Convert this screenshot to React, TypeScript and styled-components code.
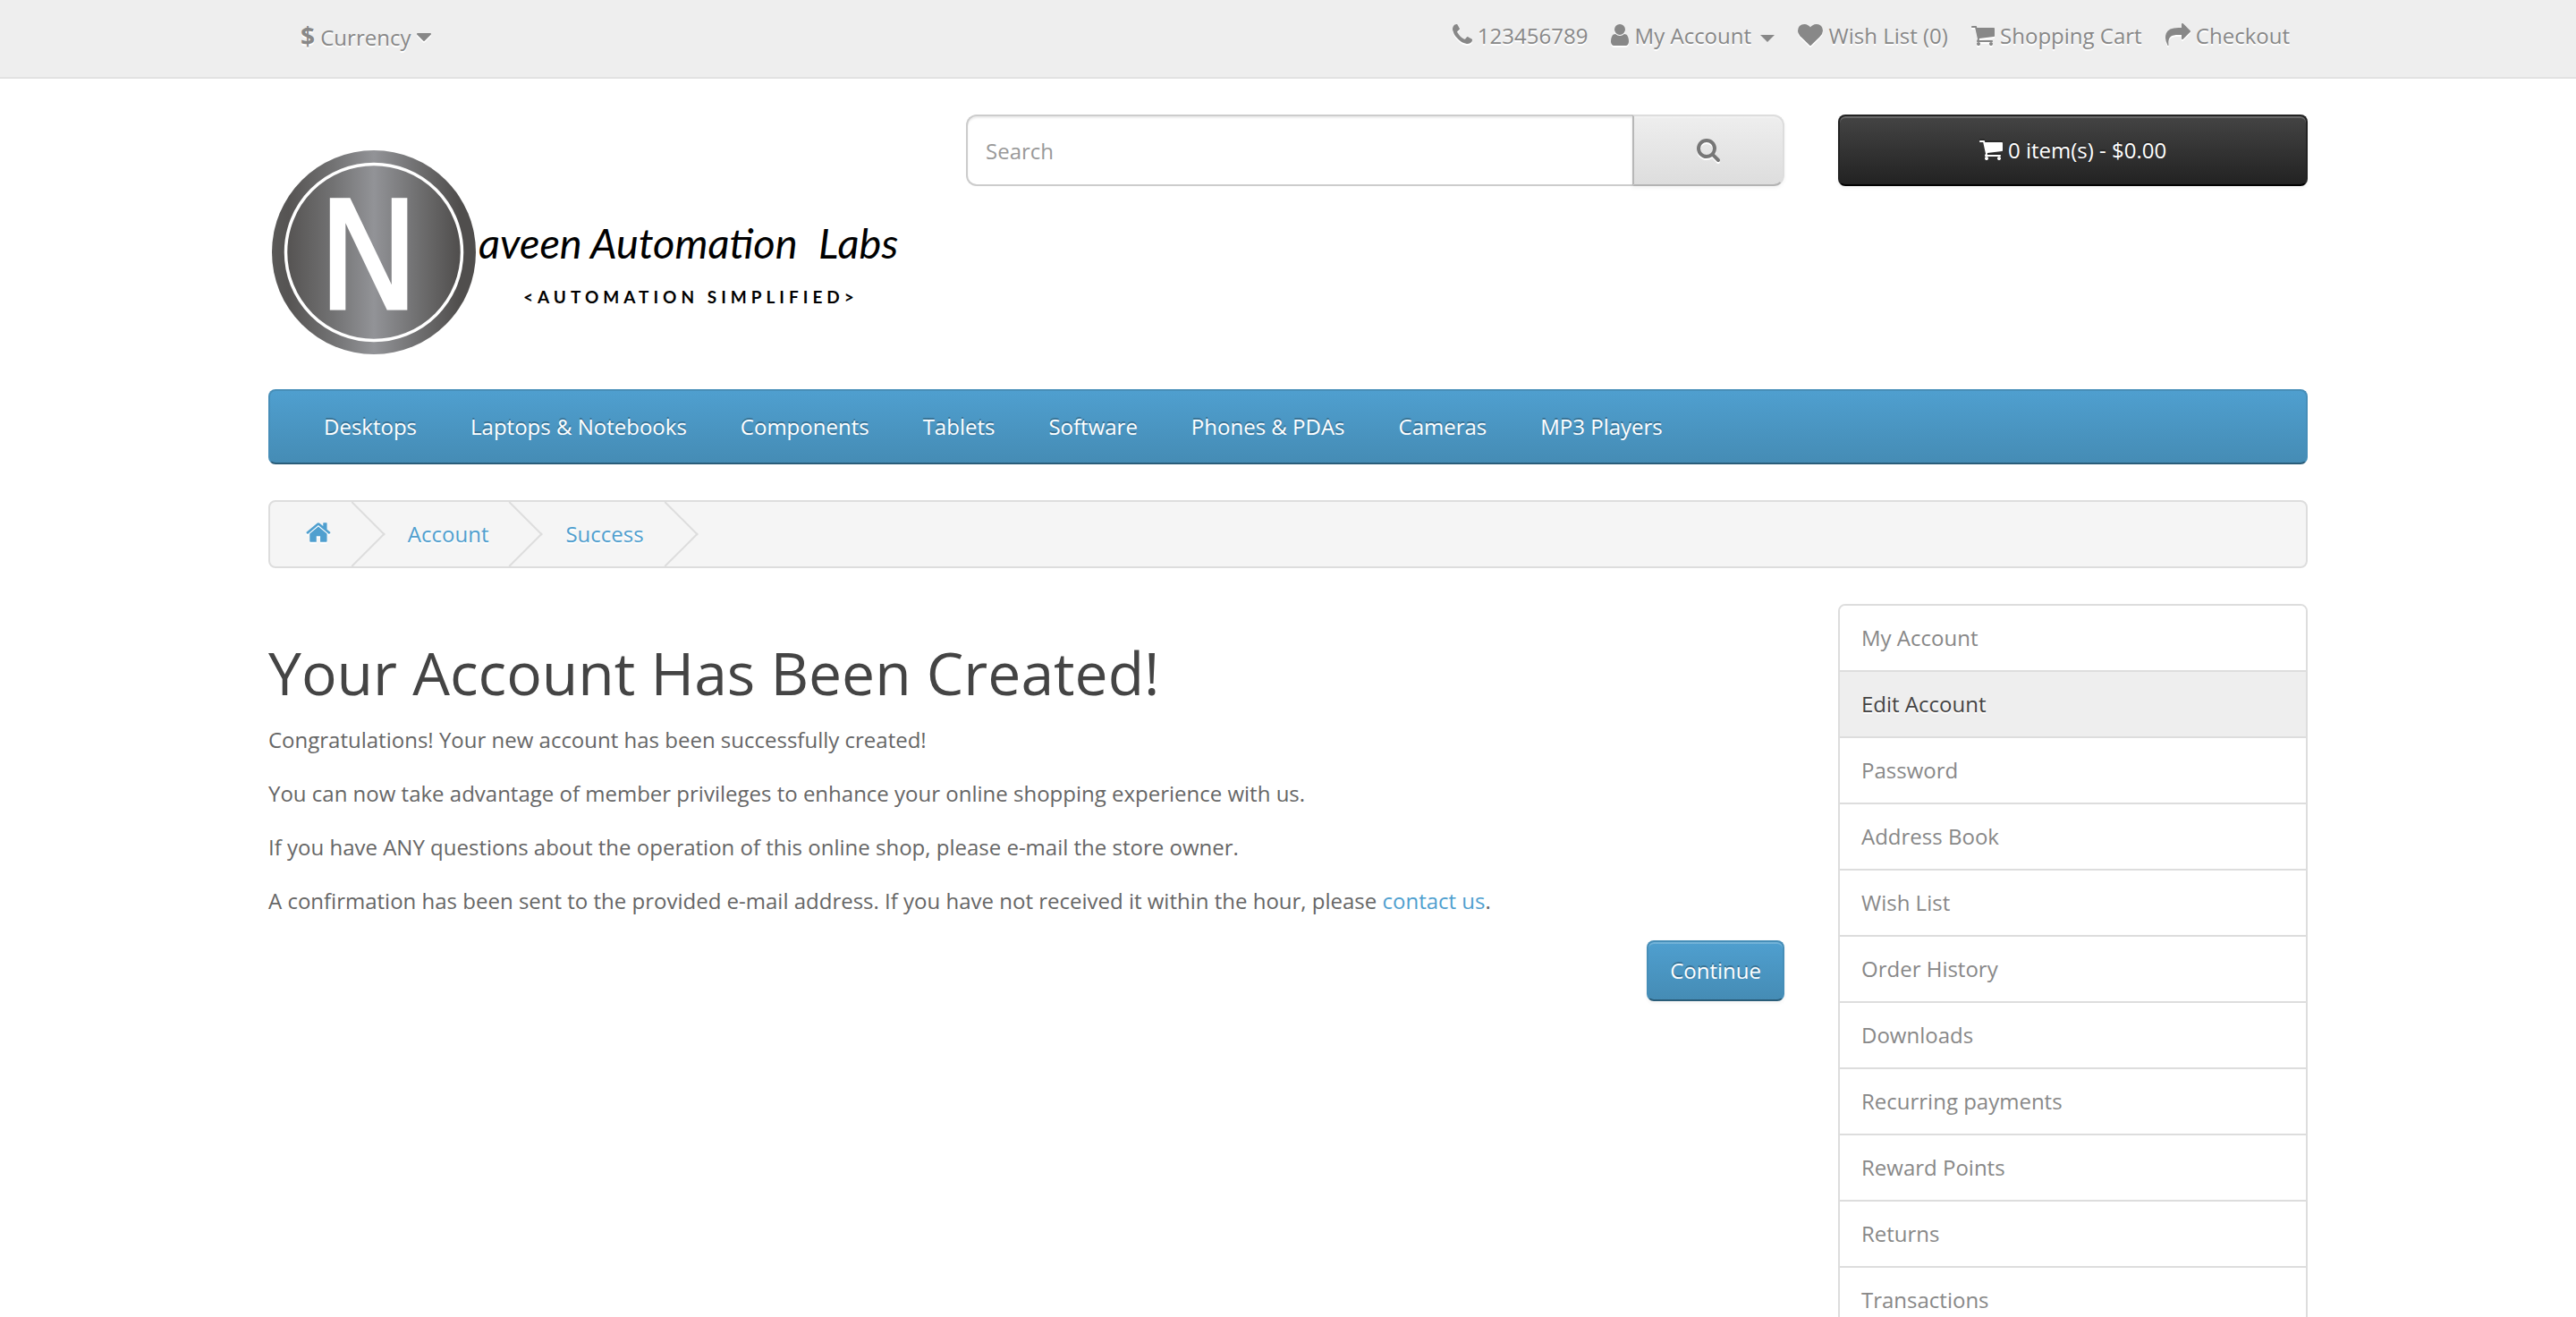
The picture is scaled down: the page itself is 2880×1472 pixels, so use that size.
import React from "react";
import styled, { createGlobalStyle, css } from "styled-components";

const GlobalStyle = createGlobalStyle`
  *, *::before, *::after { box-sizing: border-box; }
  html { scrollbar-width: none; }
  body {
    margin: 0;
    background: #fff;
    color: #666;
    font: 400 24px/40px "Open Sans", "Noto Sans", sans-serif;
  }
  a { color: #4f9fcf; text-decoration: none; }
  button, input { font: inherit; margin: 0; }
  ul, ol { list-style: none; margin: 0; padding: 0; }
`;

const glyphs = {
  phone: [192, 1408, "M1600 1240q0 27-10 70.500t-21 68.500q-21 50-122 106-94 51-186 51-27 0-53-3.500t-57.500-12.500-47-14.500-55.500-20.500-49-18q-98-35-175-83-127-79-264-216t-216-264q-48-77-83-175-3-9-18-49t-20.500-55.500-14.500-47-12.500-57.500-3.500-53q0-92 51-186 56-101 106-122 25-11 68.500-21t70.500-10q14 0 21 3 18 6 53 76 11 19 30 54t35 63.500 31 53.500q3 4 17.500 25t21.500 35.500 7 28.500q0 20-28.500 50t-62 55-62 53-28.500 46q0 9 5 22.500t8.500 20.500 14 24 11.500 19q76 137 174 235t235 174q2 1 19 11.500t24 14 20.500 8.500 22.500 5q18 0 46-28.500t53-62 55-62 50-28.500q14 0 28.500 7t35.500 21.500 25 17.500q25 15 53.500 31t63.500 35 54 30q70 35 76 53 3 7 3 21z"],
  user: [256, 1280, "M1536 1399q0 109-62.5 187t-150.5 78h-854q-88 0-150.5-78t-62.5-187q0-85 8.5-160.5t31.5-152 58.5-131 94-89 134.5-34.5q131 128 313 128t313-128q76 0 134.5 34.5t94 89 58.5 131 31.5 152 8.5 160.5zm-256-887q0 159-112.5 271.5t-271.5 112.5-271.5-112.5-112.5-271.5 112.5-271.5 271.5-112.5 271.5 112.5 112.5 271.5z"],
  heart: [0, 1792, "M896 1664q-26 0-44-18l-624-602q-10-8-27.5-26t-55.5-65.5-68-97.5-53.5-121-23.5-138q0-220 127-344t351-124q62 0 126.5 21.5t120 58 95.5 68.5 76 68q36-36 76-68t95.5-68.5 120-58 126.5-21.5q224 0 351 124t127 344q0 221-229 450l-623 600q-18 18-44 18z"],
  cart: [64, 1664, "M704 1536q0 52-38 90t-90 38-90-38-38-90 38-90 90-38 90 38 38 90zm896 0q0 52-38 90t-90 38-90-38-38-90 38-90 90-38 90 38 38 90zm128-1088v512q0 24-16.5 42.5t-40.5 21.5l-1044 122q13 60 13 70 0 16-24 64h920q26 0 45 19t19 45-19 45-45 19h-1024q-26 0-45-19t-19-45q0-11 8-31.5t16-36 21.5-40 15.5-29.5l-177-823h-204q-26 0-45-19t-19-45 19-45 45-19h256q16 0 28.5 6.5t19.5 15.5 13 24.5 8 26 5.5 29.5 4.5 26h1201q26 0 45 19t19 45z"],
  share: [0, 1792, "M1792 640q0 26-19 45l-512 512q-19 19-45 19t-45-19-19-45v-256h-224q-98 0-175.5 6t-154 21.5-133 42.5-105.5 69.5-80 101-48.5 138.5-17.5 181q0 55 5 123 0 6 2.5 23.5t2.5 26.5q0 15-8.5 25t-23.5 10q-16 0-28-17-7-9-13-22t-13.5-30-10.5-24q-127-285-127-451 0-199 53-333 162-403 875-403h224v-256q0-26 19-45t45-19 45 19l512 512q19 19 19 45z"],
  search: [64, 1664, "M1216 832q0-185-131.5-316.5t-316.5-131.5-316.5 131.5-131.5 316.5 131.5 316.5 316.5 131.5 316.5-131.5 131.5-316.5zm512 832q0 52-38 90t-90 38q-54 0-90-38l-343-342q-179 124-399 124-143 0-273.5-55.5t-225-150-150-225-55.5-273.5 55.5-273.5 150-225 225-150 273.5-55.5 273.5 55.5 225 150 150 225 55.5 273.5q0 220-124 399l343 343q37 37 37 90z"],
  home: [64, 1664, "M1472 992v480q0 26-19 45t-45 19h-384v-384h-256v384h-384q-26 0-45-19t-19-45v-480q0-1 .5-3t.5-3l575-474 575 474q1 2 1 6zm223-69l-62 74q-8 9-21 11h-3q-13 0-21-7l-692-577-692 577q-12 8-24 7-13-2-21-11l-62-74q-8-10-7-23.5t11-21.5l719-599q32-26 76-26t76 26l244 204v-195q0-14 9-23t23-9h192q14 0 23 9t9 23v408l219 182q10 8 11 21.5t-7 23.5z"],
  caret: [384, 1024, "M1408 704q0 26-19 45l-448 448q-19 19-45 19t-45-19l-448-448q-19-19-19-45t19-45 45-19h896q26 0 45 19t19 45z"],
} as const;

const Glyph = styled.svg<{ $size: number; $shadow: string }>`
  height: ${(p) => p.$size}px;
  vertical-align: -4px;
  fill: currentColor;
  overflow: visible;
  filter: drop-shadow(${(p) => p.$shadow});
`;

function Icon({ name, size = 28, shadow = "0 2px 0 #fff" }: { name: keyof typeof glyphs; size?: number; shadow?: string }) {
  const [x, width, d] = glyphs[name];
  return (
    <Glyph viewBox={`${x} 0 ${width} 1792`} $size={size} $shadow={shadow} aria-hidden="true">
      <path d={d} />
    </Glyph>
  );
}

const Container = styled.div`
  max-width: 2340px;
  margin: 0 auto;
  padding: 0 30px;
`;

const Columns = styled.div`
  display: grid;
  grid-template-columns: repeat(12, minmax(0, 1fr));
  column-gap: 60px;
  align-items: start;
`;

const Column = styled.div<{ $span: number }>`
  grid-column: span ${(p) => p.$span};
`;

const TopBar = styled.nav`
  margin-bottom: 40px;
  padding: 8px 0 10px;
  background: #eee;
  border-bottom: 2px solid #e2e2e2;
`;

const TopRow = styled(Container)`
  display: flex;
  justify-content: space-between;
  align-items: flex-start;
`;

const buttonBox = css`
  padding: 15px 24px;
  border: 2px solid transparent;
  border-radius: 8px;
  line-height: 34px;
  cursor: pointer;
`;

const CurrencyButton = styled.button`
  ${buttonBox}
  margin-left: 10px;
  background: none;
  color: #888;
  text-shadow: 0 2px 0 #fff;

  strong {
    font-size: 28px;
    line-height: 28px;
  }
`;

const TopLinks = styled.ul`
  display: flex;
  gap: 26px;
  padding: 12px 20px 0;

  a {
    color: #888;
    text-shadow: 0 2px 0 #fff;
    white-space: nowrap;
  }
`;

const Caret = styled.span`
  display: inline-block;
  margin-left: 4px;
  vertical-align: middle;
  border: 8px solid transparent;
  border-top-color: currentColor;
  border-bottom: 0;
`;

const LogoLink = styled.a`
  display: block;
  margin-bottom: 20px;

  svg { display: block; width: 100%; }
`;

const SearchForm = styled.form`
  display: flex;
`;

const SearchInput = styled.input`
  flex: 1;
  min-width: 0;
  height: 80px;
  padding: 20px;
  border: 2px solid #ccc;
  border-right: 0;
  border-radius: 12px 0 0 12px;
  color: #555;
  box-shadow: inset 0 2px 2px rgba(0, 0, 0, 0.075);
  outline: none;

  &::placeholder { color: #999; opacity: 1; }
`;

const SearchButton = styled.button`
  width: 170px;
  height: 80px;
  border: 2px solid;
  border-color: #ddd #ddd #b3b3b3 #b7b7b7;
  border-radius: 0 12px 12px 0;
  background: linear-gradient(#eee, #ddd);
  color: #777;
  box-shadow: inset 0 2px 0 rgba(255, 255, 255, 0.2), 0 2px 4px rgba(0, 0, 0, 0.05);
  cursor: pointer;
`;

const CartButton = styled.button`
  width: 100%;
  height: 80px;
  border: 2px solid;
  border-color: #222 #222 #000;
  border-radius: 8px;
  background: linear-gradient(#444, #222);
  color: #fff;
  text-shadow: 0 -2px 0 rgba(0, 0, 0, 0.25);
  box-shadow: inset 0 2px 0 rgba(255, 255, 255, 0.2), 0 2px 4px rgba(0, 0, 0, 0.05);
  cursor: pointer;
`;

const blueSurface = css`
  border: 2px solid;
  border-color: #468eb8 #468eb8 #2a5d79;
  border-radius: 8px;
  background: linear-gradient(#4f9fcf, #458cb5);
  color: #fff;
  text-shadow: 0 -2px 0 rgba(0, 0, 0, 0.25);
`;

const Menu = styled.nav`
  ${blueSurface}
  margin-bottom: 40px;
  padding: 20px 60px;

  ul { display: flex; gap: 60px; }
  a { color: #fff; white-space: nowrap; }
`;

const Breadcrumb = styled.ol`
  display: flex;
  gap: 6px;
  margin-bottom: 40px;
  padding: 16px 0;
  border: 2px solid #ddd;
  border-radius: 8px;
  background: #f5f5f5;
  overflow: hidden;
`;

const Crumb = styled.li`
  position: relative;
  padding: 0 40px;
  text-shadow: 0 2px 0 #fff;

  &::after {
    content: "";
    position: absolute;
    top: -6px;
    right: -10px;
    width: 52px;
    height: 52px;
    border: solid #ddd;
    border-width: 0 2px 2px 0;
    transform: rotate(-45deg);
    pointer-events: none;
  }
`;

const Title = styled.h1`
  margin: 40px 0 20px;
  color: #444;
  font-size: 66px;
  font-weight: 400;
  line-height: 72px;
`;

const Paragraph = styled.p`
  margin: 0 0 20px;
`;

const Actions = styled.div`
  display: flex;
  justify-content: flex-end;
  padding-top: 4px;
`;

const ContinueLink = styled.a`
  ${buttonBox}
  ${blueSurface}
  box-shadow: inset 0 2px 0 rgba(255, 255, 255, 0.2), 0 2px 4px rgba(0, 0, 0, 0.05);
`;

const AccountList = styled.ul`
  border: 2px solid #ddd;
  border-radius: 8px;
  overflow: hidden;

  li + li { border-top: 2px solid #ddd; }
`;

const AccountLink = styled.a<{ $active: boolean }>`
  display: block;
  padding: 16px 24px;
  color: ${(p) => (p.$active ? "#444" : "#888")};
  background: ${(p) => (p.$active ? "#eee" : "#fff")};
  text-shadow: ${(p) => (p.$active ? "0 2px 0 #fff" : "none")};
`;

const LogoScript = styled.text`
  font: italic 400 47px Lato, sans-serif;
`;

const LogoTagline = styled.text`
  font: 700 19px Lato, sans-serif;
  letter-spacing: 5px;
`;

const LogoInitial = styled.text`
  font: 400 168px "DejaVu Sans Condensed", "DejaVu Sans", sans-serif;
  fill: #fff;
  stroke: #fff;
  stroke-width: 3px;
`;

function Logo() {
  return (
    <svg viewBox="0 0 720 287" role="img" aria-label="naveenopencart">
      <defs>
        <linearGradient id="metal">
          <stop offset="0" stopColor="#5a5958" />
          <stop offset="0.08" stopColor="#565453" />
          <stop offset="0.3" stopColor="#727273" />
          <stop offset="0.5" stopColor="#929397" />
          <stop offset="0.7" stopColor="#727273" />
          <stop offset="0.92" stopColor="#504e4d" />
          <stop offset="1" stopColor="#504e4d" />
        </linearGradient>
      </defs>
      <circle cx="118" cy="154" r="114" fill="url(#metal)" />
      <circle cx="118" cy="154" r="98.500" fill="none" stroke="#fff" strokeWidth="3.500" />
      <LogoInitial x="112" y="217" textAnchor="middle">N</LogoInitial>
      <LogoScript x="235" y="161">aveen</LogoScript>
      <LogoScript x="360" y="161">Automation</LogoScript>
      <LogoScript x="615" y="161">Labs</LogoScript>
      <LogoTagline x="285" y="211">&lt;AUTOMATION SIMPLIFIED&gt;</LogoTagline>
    </svg>
  );
}

const categories = ["Desktops", "Laptops & Notebooks", "Components", "Tablets", "Software", "Phones & PDAs", "Cameras", "MP3 Players"];

const accountLinks = ["My Account", "Edit Account", "Password", "Address Book", "Wish List", "Order History", "Downloads", "Recurring payments", "Reward Points", "Returns", "Transactions"];

export default function App() {
  return (
    <>
      <GlobalStyle />
      <TopBar>
        <TopRow>
          <CurrencyButton type="button">
            <strong>$</strong> Currency <Icon name="caret" />
          </CurrencyButton>
          <TopLinks>
            <li><a href="#contact"><Icon name="phone" /> 123456789</a></li>
            <li><a href="#account"><Icon name="user" /> My Account <Caret /></a></li>
            <li><a href="#wishlist"><Icon name="heart" /> Wish List (0)</a></li>
            <li><a href="#cart"><Icon name="cart" /> Shopping Cart</a></li>
            <li><a href="#checkout"><Icon name="share" /> Checkout</a></li>
          </TopLinks>
        </TopRow>
      </TopBar>

      <Container as="header">
        <Columns>
          <Column $span={4}>
            <LogoLink href="#home"><Logo /></LogoLink>
          </Column>
          <Column $span={5}>
            <SearchForm role="search">
              <SearchInput type="text" placeholder="Search" aria-label="Search" />
              <SearchButton type="button" aria-label="Submit search"><Icon name="search" /></SearchButton>
            </SearchForm>
          </Column>
          <Column $span={3}>
            <CartButton type="button">
              <Icon name="cart" shadow="0 -2px 0 rgba(0, 0, 0, 0.25)" /> 0 item(s) - $0.00
            </CartButton>
          </Column>
        </Columns>
      </Container>

      <Container>
        <Menu>
          <ul>
            {categories.map((name) => (
              <li key={name}><a href="#category">{name}</a></li>
            ))}
          </ul>
        </Menu>

        <Breadcrumb>
          <Crumb><a href="#home" aria-label="Home"><Icon name="home" size={30} /></a></Crumb>
          <Crumb><a href="#account">Account</a></Crumb>
          <Crumb><a href="#success">Success</a></Crumb>
        </Breadcrumb>

        <Columns>
          <Column as="main" $span={9}>
            <Title>Your Account Has Been Created!</Title>
            <Paragraph>Congratulations! Your new account has been successfully created!</Paragraph>
            <Paragraph>You can now take advantage of member privileges to enhance your online shopping experience with us.</Paragraph>
            <Paragraph>If you have ANY questions about the operation of this online shop, please e-mail the store owner.</Paragraph>
            <Paragraph>
              A confirmation has been sent to the provided e-mail address. If you have not received it within the hour, please{" "}
              <a href="#contact">contact us</a>.
            </Paragraph>
            <Actions>
              <ContinueLink href="#account">Continue</ContinueLink>
            </Actions>
          </Column>
          <Column as="aside" $span={3}>
            <AccountList>
              {accountLinks.map((name) => (
                <li key={name}>
                  <AccountLink href="#account" $active={name === "Edit Account"}>{name}</AccountLink>
                </li>
              ))}
            </AccountList>
          </Column>
        </Columns>
      </Container>
    </>
  );
}
